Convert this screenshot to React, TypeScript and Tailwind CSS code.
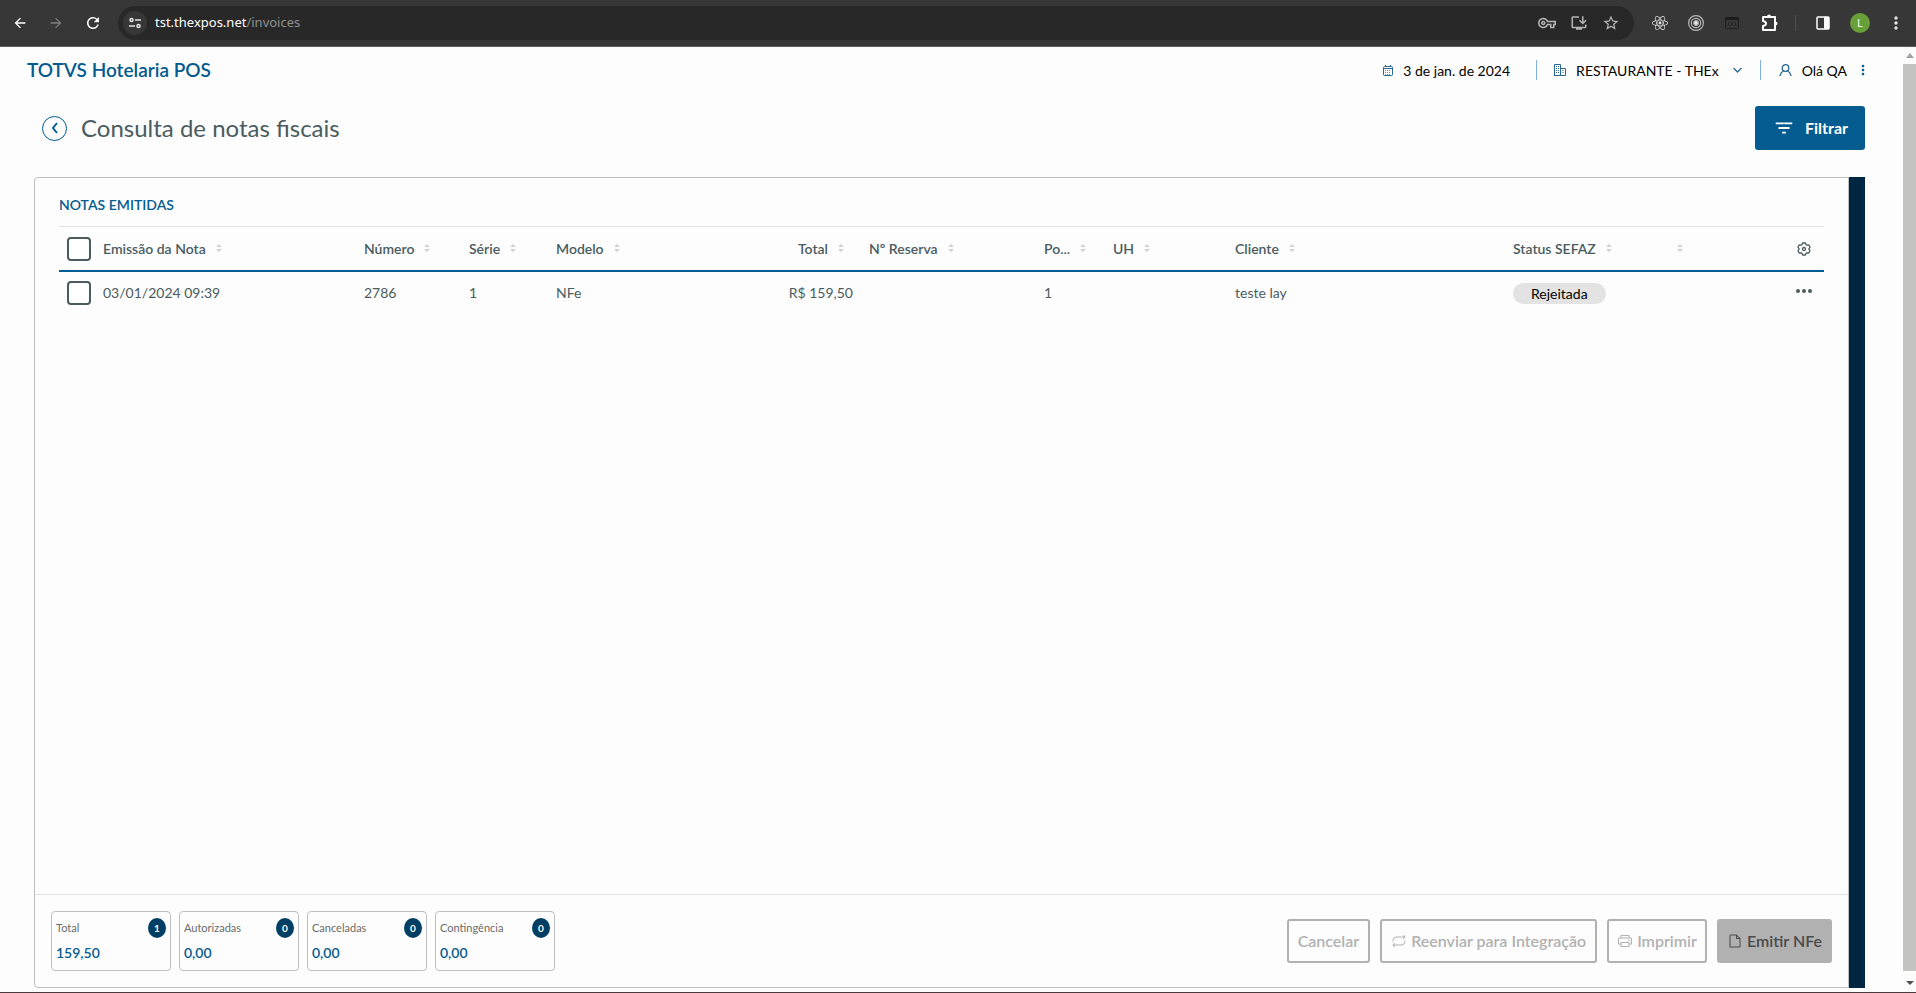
import { FaReact } from "react-icons/fa";
import {
  MdArrowBack,
  MdArrowForward,
  MdFilterList,
  MdInstallDesktop,
  MdMoreVert,
  MdOutlineVpnKey,
  MdRefresh,
  MdStarBorder,
} from "react-icons/md";
import { PiFile, PiPrinter, PiRepeat } from "react-icons/pi";

const columns = [
  { label: "Emissão da Nota", width: 261 },
  { label: "Número", width: 105 },
  { label: "Série", width: 87 },
  { label: "Modelo", width: 152 },
  { label: "Total", width: 161, right: true },
  { label: "Nº Reserva", width: 175 },
  { label: "Po...", width: 69 },
  { label: "UH", width: 122 },
  { label: "Cliente", width: 278 },
  { label: "Status SEFAZ", width: 164 },
  { label: "", width: 115 },
];

const totals = [
  { label: "Total", count: 1, value: "159,50" },
  { label: "Autorizadas", count: 0, value: "0,00" },
  { label: "Canceladas", count: 0, value: "0,00" },
  { label: "Contingência", count: 0, value: "0,00" },
];

const checkboxClass =
  "block h-6 w-6 appearance-none rounded-[4px] border-2 border-[#4a5c60] bg-white checked:bg-[#045b8f]";

const outlineButton =
  "flex h-11 items-center gap-1 rounded-[3px] border-2 border-[#b1b1b1] font-semibold text-[#b1b1b1]";

function SortIcon() {
  return (
    <svg className="h-2 w-[6px] shrink-0 fill-[#cfd4d6]" viewBox="0 0 6 8" aria-hidden="true">
      <path d="M3 0 6 3H0ZM0 5h6L3 8Z" />
    </svg>
  );
}

function TuneIcon() {
  return (
    <svg className="h-3 w-3" viewBox="0 0 12 12" fill="none" stroke="#e3e3e3" strokeWidth="1.5" aria-hidden="true">
      <circle cx="2.5" cy="3" r="1.5" />
      <path d="M6 3h6M0 9h6" />
      <circle cx="9.5" cy="9" r="1.5" />
    </svg>
  );
}

function PuzzleIcon() {
  return (
    <svg className="h-[18px] w-[18px]" viewBox="0 0 18 18" fill="none" stroke="#fff" strokeWidth="2" strokeLinejoin="round" aria-hidden="true">
      <path d="M2 3h12v13H2v-4q3-.5 3-2.500T2 7Z" />
      <path d="M6 2.500a2 2 0 0 1 4 0ZM14.500 7.500a2 2 0 0 1 0 4Z" fill="#fff" stroke="none" />
    </svg>
  );
}

function CalendarIcon() {
  return (
    <svg className="h-[11px] w-[10px]" viewBox="0 0 10 11" fill="none" stroke="#2a6791" aria-hidden="true">
      <rect x=".5" y="1.5" width="9" height="9" rx="1" />
      <path d="M1 3.500h8M2.500 0v2M7.500 0v2" />
      <path d="M2 5.500h6M2 7.500h6M2 9.500h6" strokeDasharray="1 1" strokeOpacity=".7" />
    </svg>
  );
}

function BuildingIcon() {
  return (
    <svg className="h-3 w-3" viewBox="0 0 12 12" fill="none" stroke="#2a6791" aria-hidden="true">
      <path d="M.5 11.500V.5h6v11M6.500 4.500h5v7H0" />
      <path d="M2.500 2v7M4.500 2v7M9 6v4" strokeDasharray="1 1" />
    </svg>
  );
}

function UserIcon() {
  return (
    <svg className="h-3 w-[13px]" viewBox="0 0 13 12" fill="none" stroke="#2a6791" strokeWidth="1.300" strokeLinecap="round" aria-hidden="true">
      <circle cx="6.500" cy="4" r="3.300" />
      <path d="M1 11.500q1-3.500 3.500-4.500M12 11.500q-1-3.500-3.500-4.500" />
    </svg>
  );
}

function GearIcon() {
  return (
    <svg className="h-[14px] w-[14px]" viewBox="0 0 14 14" fill="none" stroke="#4a5c60" strokeWidth="1.300" strokeLinejoin="round" aria-hidden="true">
      <path d="M5.600 1h2.800l.6 1.600 1 .6 1.800-.2 1.200 2.300L12 6.600v.8l1 1.300-1.200 2.300-1.800-.2-1 .6-.6 1.600H5.600L5 11.400l-1-.6-1.800.2L1 8.700l1-1.300v-.8L1 5.300 2.200 3l1.800.2 1-.6Z" />
      <circle cx="7" cy="7" r="1.500" />
    </svg>
  );
}

function BrowserBar() {
  return (
    <div className="flex h-[47px] shrink-0 items-center border-b border-[#5c5c5c] bg-[#373737] text-[#e3e3e3]">
      <div className="flex w-[118px] shrink-0 items-center gap-5 pl-3">
        <button type="button" aria-label="Voltar" className="text-white">
          <MdArrowBack size={16} />
        </button>
        <button type="button" aria-label="Avançar" className="text-[#7d7d7d]">
          <MdArrowForward size={16} />
        </button>
        <button type="button" aria-label="Recarregar" className="text-white">
          <MdRefresh size={18} />
        </button>
      </div>
      <div className="flex h-[34px] flex-1 items-center rounded-full bg-[#282828] pr-[14px] pl-[5px] font-['Noto_Sans',sans-serif] text-[13px]">
        <button type="button" aria-label="Informações do site" className="flex h-6 w-6 items-center justify-center rounded-full bg-[#373737]">
          <TuneIcon />
        </button>
        <span className="flex-1 pl-2 text-[#8f8f8f]">
          <span className="text-white">tst.thexpos.net</span>/invoices
        </span>
        <div className="flex items-center gap-[14px] text-[#b5b5b5]">
          <MdOutlineVpnKey size={18} />
          <MdInstallDesktop size={18} />
          <MdStarBorder size={18} />
        </div>
      </div>
      <div className="flex shrink-0 items-center pr-[10px] pl-[18px]">
        <FaReact size={16} />
        <svg className="ml-5 h-4 w-4" viewBox="0 0 16 16" fill="none" stroke="#b5b5b5" strokeWidth="1.200" aria-hidden="true">
          <circle cx="8" cy="8" r="7.400" />
          <circle cx="8" cy="8" r="4.700" />
          <circle cx="8" cy="8" r="2.300" fill="#e3e3e3" />
        </svg>
        <svg className="ml-[21px] h-3 w-[14px]" viewBox="0 0 14 12" fill="none" stroke="#1c1c1c" aria-hidden="true">
          <rect x=".5" y=".5" width="13" height="11" rx="1" />
          <path d="M1 2h12" strokeWidth="2" />
          <path d="m5 5-2 2 2 2M9 5l2 2-2 2M7.500 5l-1 4" />
        </svg>
        <div className="ml-[22px]">
          <PuzzleIcon />
        </div>
        <div className="ml-4 h-4 w-px bg-[#554d4d]" />
        <svg className="ml-5 h-[14px] w-[14px]" viewBox="0 0 14 14" aria-hidden="true">
          <rect x="1" y="1" width="12" height="12" rx="1" fill="none" stroke="#fff" strokeWidth="1.500" />
          <path d="M8 1h5v12H8Z" fill="#fff" />
        </svg>
        <div className="ml-5 flex h-5 w-5 items-center justify-center rounded-full bg-[#689f38] font-['Noto_Sans',sans-serif] text-[11px] text-white">
          L
        </div>
        <MdMoreVert size={20} className="ml-4" />
      </div>
    </div>
  );
}

function Header() {
  return (
    <header className="flex h-12 items-center justify-between pr-8 pb-[2px] pl-[27px] text-[14px] text-black">
      <div className="text-[19px] font-semibold text-[#045b8f]">TOTVS Hotelaria POS</div>
      <div className="flex items-center">
        <CalendarIcon />
        <span className="pl-[10px]">3 de jan. de 2024</span>
        <span className="mr-[17px] ml-[26px] h-5 w-px bg-[#85b2d0]" />
        <button type="button" className="flex items-center">
          <BuildingIcon />
          <span className="pr-[14px] pl-[10px]">RESTAURANTE - THEx</span>
          <svg className="h-[6px] w-[9px]" viewBox="0 0 9 6" fill="none" stroke="#2a6791" strokeWidth="1.300" aria-hidden="true">
            <path d="m.5 1 4 4 4-4" />
          </svg>
        </button>
        <span className="mx-[18px] h-5 w-px bg-[#85b2d0]" />
        <UserIcon />
        <span className="pl-[10px]">Olá QA</span>
        <button type="button" aria-label="Mais opções" className="pl-2 text-[#045b8f]">
          <MdMoreVert size={16} />
        </button>
      </div>
    </header>
  );
}

function InvoiceTable() {
  return (
    <table className="w-full table-fixed text-left text-[14px] text-[#4a5c60]">
      <colgroup>
        <col style={{ width: 36 }} />
        {columns.map((column, index) => (
          <col key={index} style={{ width: column.width }} />
        ))}
        <col style={{ width: 40 }} />
      </colgroup>
      <thead>
        <tr className="h-11 border-t border-b-2 border-t-[#e3e3e3] border-b-[#045b8f]">
          <th className="pt-[2px] pl-2">
            <input type="checkbox" aria-label="Selecionar todas" className={checkboxClass} />
          </th>
          {columns.map((column, index) => (
            <th key={index} className="px-2 font-semibold">
              <button
                type="button"
                aria-label={`Ordenar ${column.label}`}
                className={column.right ? "flex w-full items-center justify-end gap-[10px] pr-[9px]" : "flex items-center gap-[10px]"}
              >
                {column.label && <span className="whitespace-nowrap">{column.label}</span>}
                <SortIcon />
              </button>
            </th>
          ))}
          <th className="pt-[2px]">
            <button type="button" aria-label="Configurar colunas" className="mx-auto block">
              <GearIcon />
            </button>
          </th>
        </tr>
      </thead>
      <tbody>
        <tr className="h-11">
          <td className="pl-2">
            <input type="checkbox" aria-label="Selecionar nota 2786" className={checkboxClass} />
          </td>
          <td className="px-2 pb-[2px]">03/01/2024 09:39</td>
          <td className="px-2 pb-[2px]">2786</td>
          <td className="px-2 pb-[2px]">1</td>
          <td className="px-2 pb-[2px]">NFe</td>
          <td className="px-2 pb-[2px] text-right">R$ 159,50</td>
          <td />
          <td className="px-2 pb-[2px]">1</td>
          <td />
          <td className="px-2 pb-[2px]">teste lay</td>
          <td className="px-2">
            <span className="inline-block rounded-full bg-[#e3e3e3] px-[18px] text-[14px] leading-[21px] text-black">Rejeitada</span>
          </td>
          <td />
          <td>
            <button type="button" aria-label="Ações" className="mx-auto mb-1 flex gap-[2px]">
              <span className="h-1 w-1 rounded-full bg-[#4a5c60]" />
              <span className="h-1 w-1 rounded-full bg-[#4a5c60]" />
              <span className="h-1 w-1 rounded-full bg-[#4a5c60]" />
            </button>
          </td>
        </tr>
      </tbody>
    </table>
  );
}

function Footer() {
  return (
    <footer className="flex items-center justify-between border-t border-[#e3e3e3] p-4">
      <div className="flex gap-2">
        {totals.map((total) => (
          <div key={total.label} className="h-[60px] w-[120px] rounded-[4px] border border-[#bfbfbf] px-1 pt-[6px]">
            <div className="flex h-5 items-center justify-between text-[11px] text-[#6b6b6b]">
              {total.label}
              <span className="flex h-5 w-[18px] items-center justify-center rounded-[50%] bg-[#003e64] text-[10px] font-bold text-white">
                {total.count}
              </span>
            </div>
            <div className="pt-[5px] text-[14px] leading-5 font-semibold text-[#045b8f]">{total.value}</div>
          </div>
        ))}
      </div>
      <div className="flex gap-[10px] text-[16px]">
        <button type="button" className={`${outlineButton} px-[9px]`}>
          Cancelar
        </button>
        <button type="button" className={`${outlineButton} px-[9px]`}>
          <PiRepeat size={16} />
          Reenviar para Integração
        </button>
        <button type="button" className={`${outlineButton} px-2`}>
          <PiPrinter size={16} />
          Imprimir
        </button>
        <button type="button" className="flex h-11 items-center gap-1 rounded-[3px] bg-[#b1b1b1] px-[10px] font-semibold text-[#4a4a4a]">
          <PiFile size={16} />
          Emitir NFe
        </button>
      </div>
    </footer>
  );
}

function Scrollbar() {
  return (
    <div className="flex w-[13px] shrink-0 flex-col items-center bg-[#fcfcfc]" aria-hidden="true">
      <svg className="h-[17px] w-2 fill-[#a3a3a3]" viewBox="0 0 8 17">
        <path d="M4 6 8 11H0Z" />
      </svg>
      <div className="w-full flex-1 bg-[#c4c4c2]" />
      <svg className="h-[21px] w-2 fill-[#505050]" viewBox="0 0 8 21">
        <path d="M0 10h8l-4 4Z" />
      </svg>
    </div>
  );
}

export default function App() {
  return (
    <div className="flex h-screen flex-col border-b border-[#4a3c3c] bg-[#fdfdfd] font-['Lato','Open_Sans',sans-serif]">
      <BrowserBar />
      <div className="flex min-h-0 flex-1">
        <div className="flex min-w-0 flex-1 flex-col">
          <Header />
          <div className="flex items-center justify-between pt-[11px] pr-[38px] pl-[42px]">
            <div className="flex items-center gap-[14px]">
              <button type="button" aria-label="Voltar" className="flex h-[25px] w-[25px] items-center justify-center rounded-full border border-[#045b8f]">
                <svg className="h-3 w-2" viewBox="0 0 8 12" fill="none" stroke="#045b8f" strokeWidth="2" aria-hidden="true">
                  <path d="M6 1 2 6l4 5" />
                </svg>
              </button>
              <h1 className="text-[24px] text-[#4a5c60]">Consulta de notas fiscais</h1>
            </div>
            <button type="button" className="flex h-11 items-center gap-[10px] rounded-[3px] bg-[#045b8f] pr-[17px] pl-[18px] text-[16px] font-bold text-white">
              <MdFilterList size={22} />
              Filtrar
            </button>
          </div>
          <main className="mt-[27px] mr-[38px] mb-1 ml-[34px] flex min-h-0 flex-1 border-r-[16px] border-[#002741]">
            <section className="flex min-w-0 flex-1 flex-col rounded-l-[4px] border border-[#bfbfbf]">
              <div className="flex-1 px-6">
                <h2 className="pt-[17px] pb-[11px] text-[14px] leading-5 font-semibold text-[#045b8f]">NOTAS EMITIDAS</h2>
                <InvoiceTable />
              </div>
              <Footer />
            </section>
          </main>
        </div>
        <Scrollbar />
      </div>
    </div>
  );
}
